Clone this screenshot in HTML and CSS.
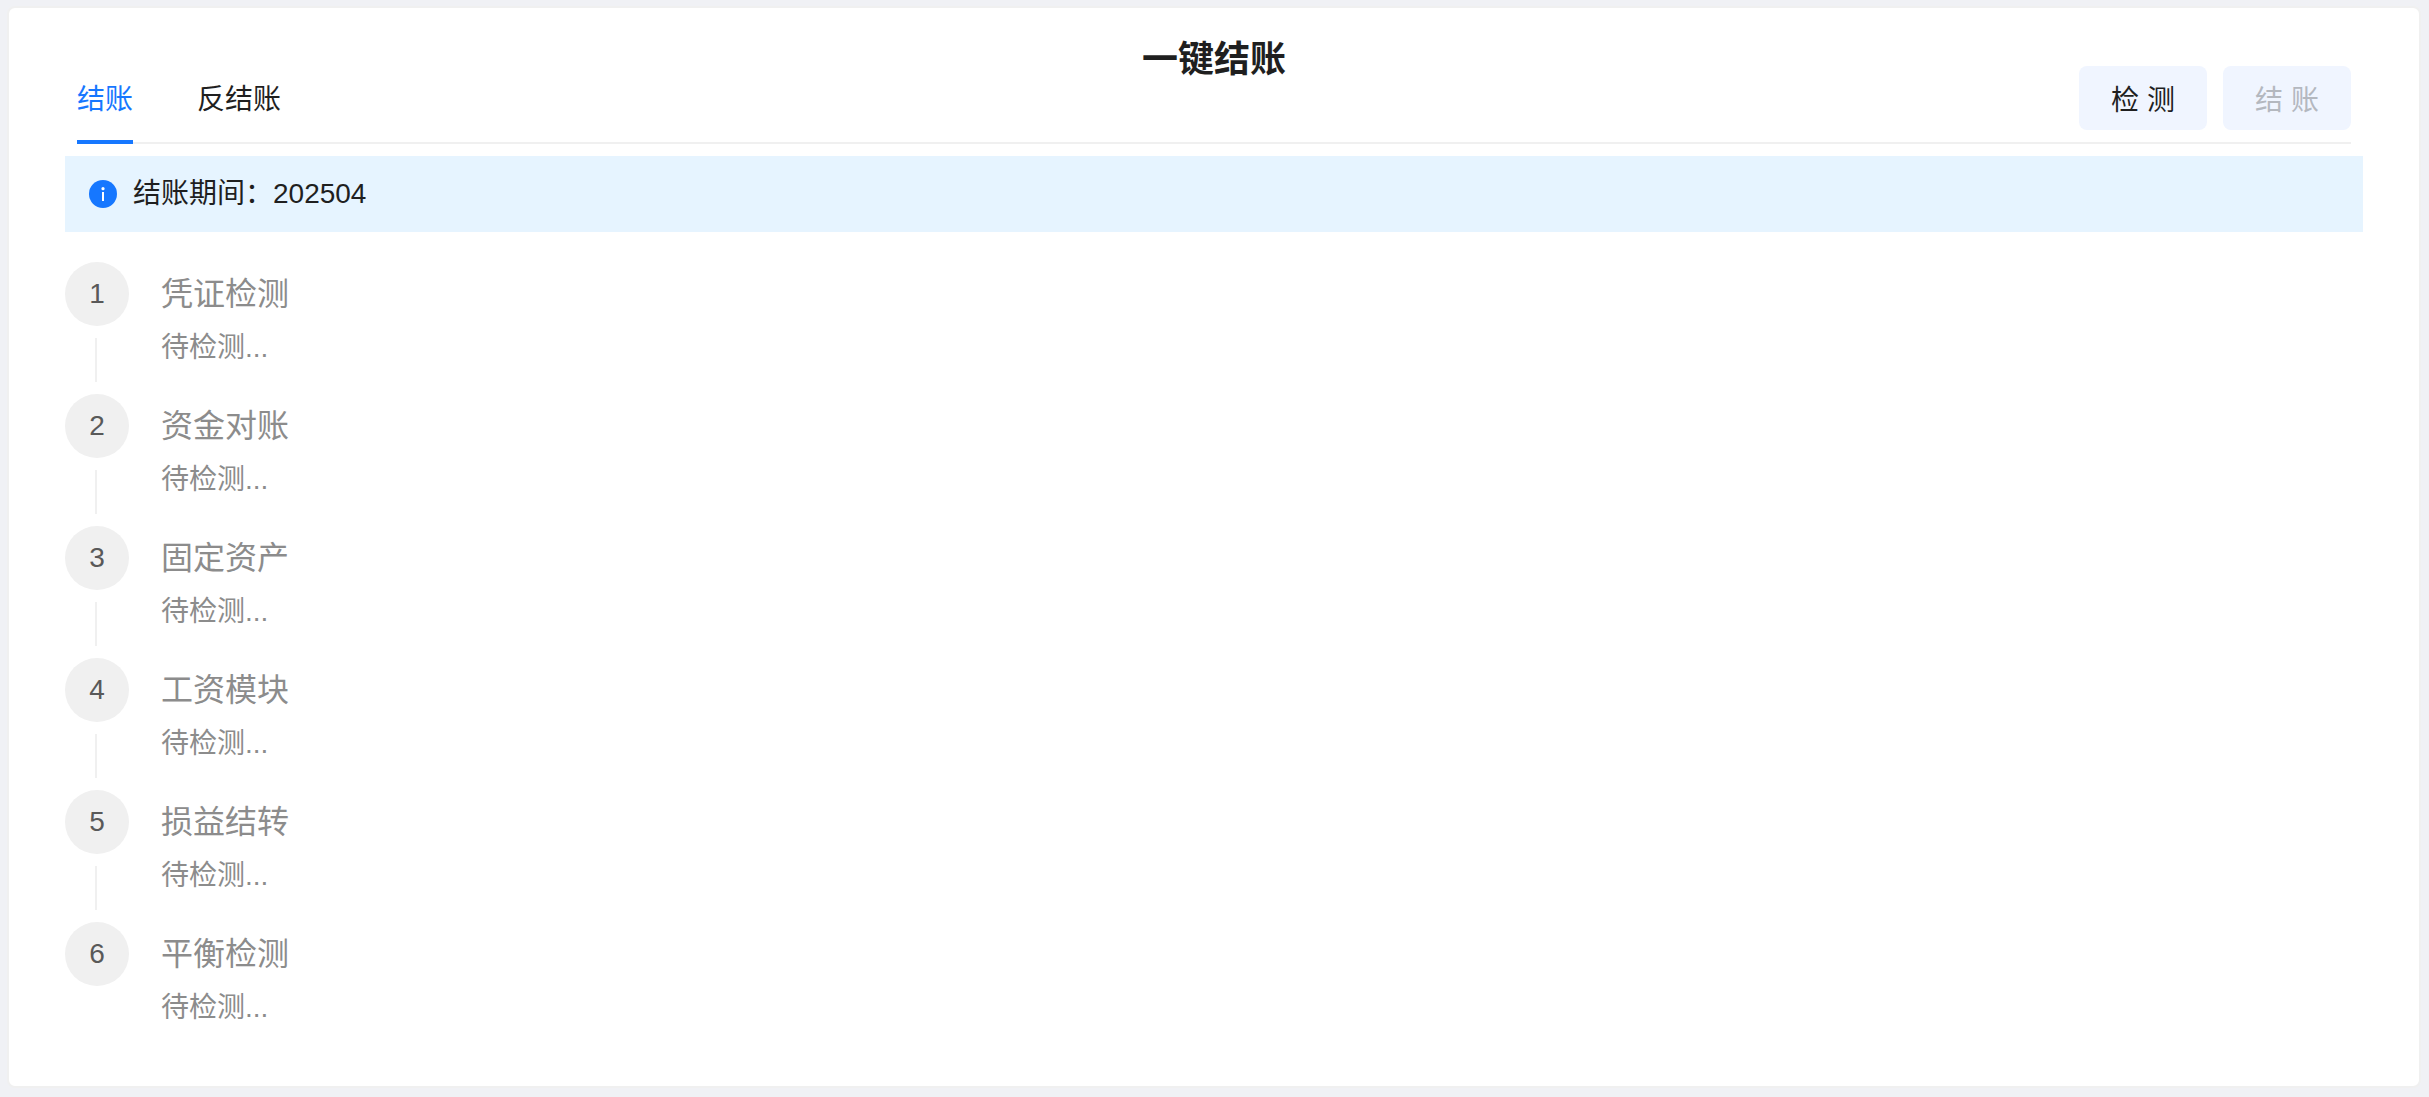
FILE: index.html
```
<!DOCTYPE html>
<html lang="zh-CN">
<head>
    <meta charset="UTF-8">
    <meta name="viewport" content="width=device-width, initial-scale=1.0">
    <title>一键结账</title>
    <link rel="stylesheet" href="styles.css">
</head>
<body>
    <main class="card">
        <header class="header">
            <nav class="tabs">
                <button type="button" class="tab active">结账</button>
                <button type="button" class="tab">反结账</button>
            </nav>
            <h1 class="title">一键结账</h1>
            <div class="actions">
                <button type="button" class="btn">检 测</button>
                <button type="button" class="btn" disabled>结 账</button>
            </div>
        </header>

        <div class="alert">
            <svg class="alert-icon" viewBox="0 0 28 28" aria-hidden="true">
                <circle cx="14" cy="14" r="14" fill="#1677ff"/>
                <circle cx="14" cy="8.7" r="1.6" fill="#fff"/>
                <rect x="13" y="12" width="2" height="9" fill="#fff"/>
            </svg>
            <span>结账期间：202504</span>
        </div>

        <ol class="steps">
            <li class="step">
                <span class="step-icon">1</span>
                <div class="step-content">
                    <h2 class="step-title">凭证检测</h2>
                    <p class="step-desc">待检测...</p>
                </div>
            </li>
            <li class="step">
                <span class="step-icon">2</span>
                <div class="step-content">
                    <h2 class="step-title">资金对账</h2>
                    <p class="step-desc">待检测...</p>
                </div>
            </li>
            <li class="step">
                <span class="step-icon">3</span>
                <div class="step-content">
                    <h2 class="step-title">固定资产</h2>
                    <p class="step-desc">待检测...</p>
                </div>
            </li>
            <li class="step">
                <span class="step-icon">4</span>
                <div class="step-content">
                    <h2 class="step-title">工资模块</h2>
                    <p class="step-desc">待检测...</p>
                </div>
            </li>
            <li class="step">
                <span class="step-icon">5</span>
                <div class="step-content">
                    <h2 class="step-title">损益结转</h2>
                    <p class="step-desc">待检测...</p>
                </div>
            </li>
            <li class="step">
                <span class="step-icon">6</span>
                <div class="step-content">
                    <h2 class="step-title">平衡检测</h2>
                    <p class="step-desc">待检测...</p>
                </div>
            </li>
        </ol>
    </main>
</body>
</html>
```
FILE: styles.css
```
* {
    box-sizing: border-box;
}

body {
    margin: 0;
    padding: 6px 8px 8px 7px;
    background-color: #f0f1f5;
    color: #1f1f1f;
    font-family: "Liberation Sans", "Noto Sans CJK SC", sans-serif;
    font-size: 28px;
    line-height: 44px;
}

button {
    border: none;
    color: inherit;
    cursor: pointer;
    font: inherit;
}

h1, h2, p {
    margin: 0;
    font-weight: normal;
}

.card {
    background-color: #fff;
    border: 2px solid #f0f0f0;
    border-radius: 8px;
    padding: 24px 56px 32px;
}

/* Header: tabs, title, actions */
.header {
    display: grid;
    grid-template-columns: 1fr auto 1fr;
    align-items: end;
    margin: 0 12px 12px;
    height: 112px;
    border-bottom: 2px solid #f0f0f0;
}

.tabs {
    display: flex;
    gap: 64px;
    margin-bottom: -2px;
}

.tab {
    background: none;
    border-bottom: 4px solid transparent;
    padding: 0 0 18px;
}

.tab.active {
    border-bottom-color: #1677ff;
    color: #1677ff;
}

.title {
    align-self: start;
    font-size: 36px;
    font-weight: bold;
    line-height: 56px;
}

.actions {
    display: flex;
    justify-content: flex-end;
    gap: 16px;
    margin-bottom: 12px;
}

.btn {
    width: 128px;
    height: 64px;
    padding: 6px 0 0;
    background-color: #f0f5ff;
    border-radius: 8px;
}

.btn:disabled {
    color: #b4b8bf;
    cursor: not-allowed;
}

.alert {
    display: flex;
    align-items: center;
    gap: 16px;
    padding: 16px 24px;
    background-color: #e6f4ff;
}

.alert-icon {
    width: 28px;
    height: 28px;
}

/* Steps */
.steps {
    list-style: none;
    margin: 30px 0 0;
    padding: 0;
}

.step {
    position: relative;
    display: flex;
    gap: 32px;
    height: 132px;
}

.step:not(:last-child)::after {
    content: "";
    position: absolute;
    top: 76px;
    bottom: 12px;
    left: 30px;
    width: 2px;
    background-color: #f0f0f0;
}

.step-icon {
    width: 64px;
    height: 64px;
    border-radius: 50%;
    background-color: #f0f0f0;
    color: #595959;
    line-height: 64px;
    text-align: center;
}

.step-content {
    color: #8c8c8c;
}

.step-title {
    font-size: 32px;
    line-height: 64px;
}
```
